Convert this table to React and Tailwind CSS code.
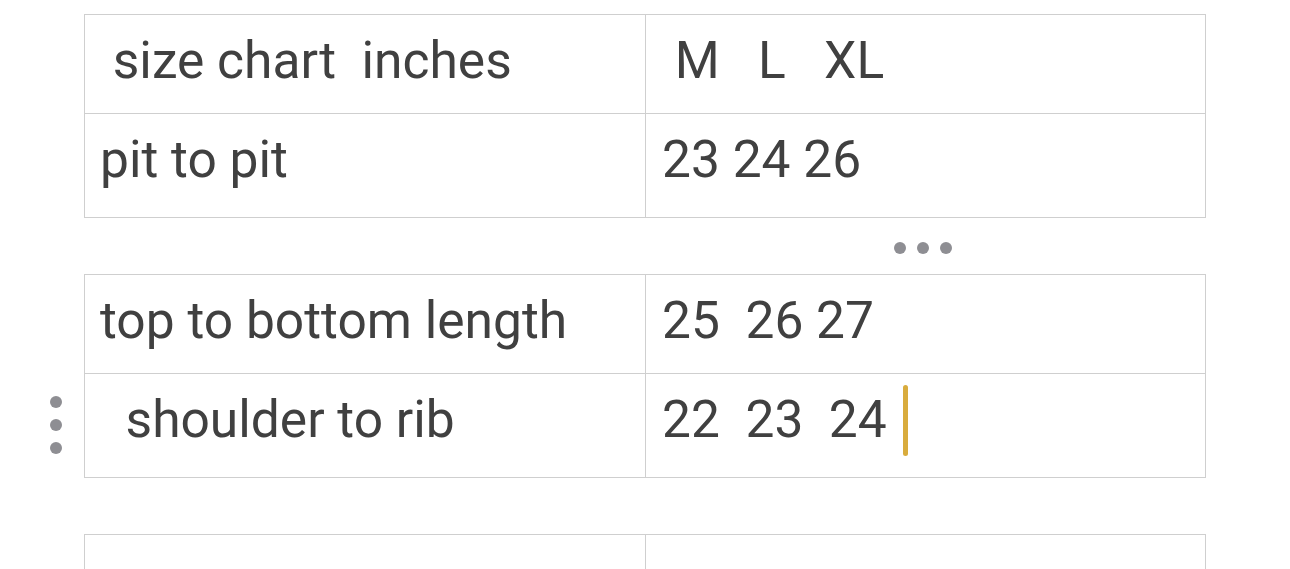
import React from 'react'

const top = [
  [' size chart  inches', ' M   L   XL'],
  ['pit to pit', '23 24 26'],
]

const bottom = [
  ['top to bottom length', '25  26 27'],
  ['  shoulder to rib', '22  23  24'],
]

function Dot() {
  return <span className="block w-[12px] h-[12px] rounded-full bg-[#8e8e93]" />
}

function SizeTable({ rows, caret }) {
  return (
    <table className="w-[1122px] border-collapse table-fixed">
      <tbody>
        {rows.map((row, i) => (
          <tr key={i} className={i === rows.length - 1 ? 'h-[104px]' : 'h-[99px]'}>
            <td className="relative w-[561px] border border-[#cfcfcf] px-[15px] align-top">
              {caret && i === rows.length - 1 && (
                <span className="absolute left-[-35px] top-[22px] flex flex-col gap-[11px]">
                  <Dot />
                  <Dot />
                  <Dot />
                </span>
              )}
              <span className="block whitespace-pre pt-[16px] leading-[60px]">{row[0]}</span>
            </td>
            <td className="border border-[#cfcfcf] px-[16px] align-top">
              <span className="block whitespace-pre pt-[16px] leading-[60px]">
                {row[1]}
                {caret && i === rows.length - 1 && (
                  <span className="relative inline-block w-0 h-0">
                    <span className="absolute left-[16px] top-[-52px] w-[5px] h-[71px] rounded-full bg-[#d9ac3d]" />
                  </span>
                )}
              </span>
            </td>
          </tr>
        ))}
      </tbody>
    </table>
  )
}

export default function App() {
  return (
    <div className="w-[1290px] h-[569px] overflow-hidden bg-white text-[#404040] text-[51.5px] font-['Roboto',sans-serif]">
      <div className="pl-[84px] pt-[14px]">
        <SizeTable rows={top} />
        <div className="h-[56px] flex items-center justify-end pt-[4px] pr-[338px] gap-[11px]">
          <Dot />
          <Dot />
          <Dot />
        </div>
        <SizeTable rows={bottom} caret />
        <div className="h-[56px]" />
        <table className="w-[1122px] border-collapse table-fixed">
          <tbody>
            <tr className="h-[99px]">
              <td className="w-[561px] border border-[#cfcfcf]" />
              <td className="border border-[#cfcfcf]" />
            </tr>
          </tbody>
        </table>
      </div>
    </div>
  )
}
